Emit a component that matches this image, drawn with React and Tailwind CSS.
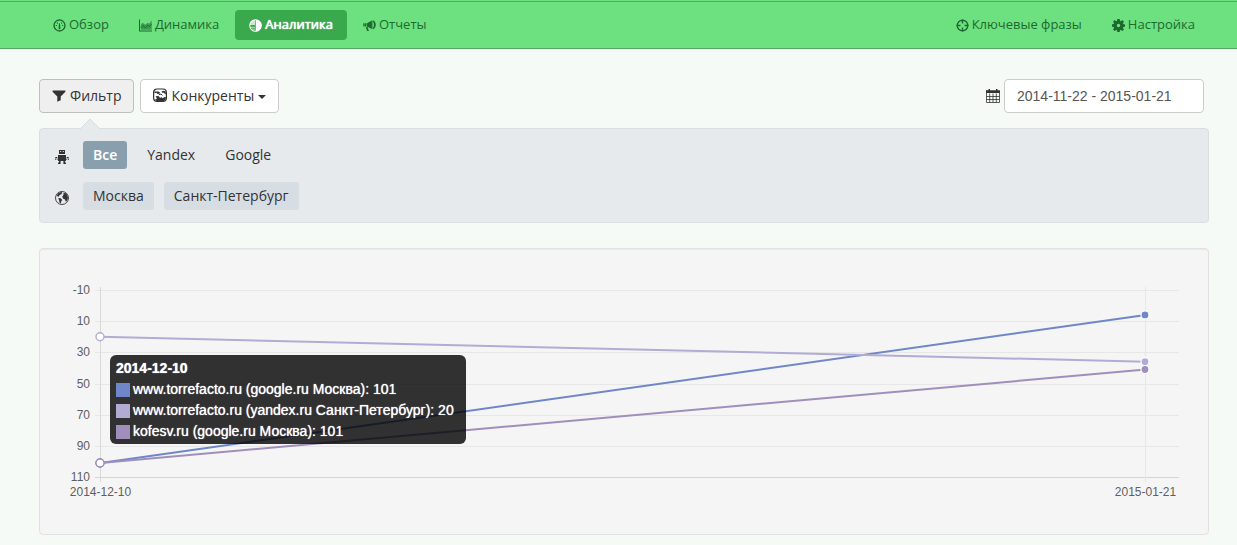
import clsx from "clsx";

const ICONS = {
  dashboard: (
    <>
      <circle cx="7" cy="7" r="5.9" fill="none" stroke="currentColor" strokeWidth="1.5" />
      <path d="M6.5 4.5h1l.5 5.5a1 1 0 0 1-2 0zM3 6.400h1.300v1.200H3zM9.700 6.400H11v1.200H9.700zM4.100 3.800h1.200V5H4.100zM8.700 3.800h1.200V5H8.700z" />
    </>
  ),
  stats: (
    <>
      <path d="M0 .5h1.100v12H14v1H0z" />
      <path d="M2 11.700V6l2.200-2 2.300 2.300L9.500 4l1.500 1.200L13.700 1.500v10.200z" opacity=".6" />
      <path d="M2 9.500l2.300-2.300L7 9.600l2.600-3 1.600 1.600 2.400-2.600" fill="none" stroke="currentColor" />
    </>
  ),
  pie: (
    <>
      <circle cx="7" cy="7" r="6.200" fill="none" stroke="currentColor" strokeWidth="1.100" />
      <path d="M7.300 .8A6.200 6.200 0 0 1 7.300 13.200z" />
      <path d="M6.500 .8A6.200 6.200 0 0 0 .8 6.500h5.700z" opacity=".75" />
      <path d="M1 9h5.500M1.800 11h4.700" stroke="currentColor" strokeWidth=".9" opacity=".7" />
    </>
  ),
  bullhorn: (
    <>
      <path d="M4.300 4.700 9.600 1.600v9.200L4.300 8.100zM.3 4.700h1.500v3.400H.3zM2.200 4.700h1.500v3.400H2.200zM3 8.600h2l1.300 4.200H4.400z" />
      <path d="M10.300 1.300c4.600.6 4.600 9.400 0 10z" />
      <path d="M11 3.300c1.200.8 1.200 5.200 0 6z" fill="#6de17f" />
    </>
  ),
  target: (
    <>
      <circle cx="7" cy="7" r="5.700" fill="none" stroke="currentColor" strokeWidth="1.500" />
      <path d="M7 .5v4.400M7 9.100v4.400M.5 7h4.400M9.100 7h4.400" stroke="currentColor" strokeWidth="1.500" />
    </>
  ),
  cog: (
    <path
      fillRule="evenodd"
      d="M5.700 0h2.600l.3 1.900 1 .4 1.600-1.100 1.700 1.700-1.100 1.600.4 1 1.800.3v2.500l-1.800.3-.4 1 1.100 1.600-1.700 1.700-1.600-1.100-1 .4L8.300 14H5.700l-.3-1.800-1-.4-1.600 1.100-1.700-1.700 1.100-1.600-.4-1L0 8.300V5.700l1.800-.3.4-1-1.100-1.600L2.800 1.200l1.600 1.100 1-.4zM7 5.200a1.800 1.800 0 1 0 0 3.600 1.800 1.800 0 0 0 0-3.600z"
    />
  ),
  filter: <path d="M.6 2.500h12.800v1.300L8.700 8.400v3.800l-3.400 1.600V8.400L.6 3.800z" />,
  competitors: (
    <>
      <rect x=".6" y="1" width="12.800" height="12.400" rx="3.500" fill="none" stroke="currentColor" strokeWidth="1.200" />
      <path d="M1.500 3.500h4l1.700 1.200-.8 1-1.900.2-1-1.200-2 .5zM8.500 3.700l1.500-1 2.500.6.5 3.200-1.500-1-1-1-1 .5zM2.500 8.300l3-.4L7 9.700l1.500-.4 1.300 1 1.700-1.300 1.500.3-.5 2.500L11 13H3.500L2 11.500l2-1z" />
      <path d="M5.800 6.800 8 6l1.500 1.500" fill="none" stroke="currentColor" />
    </>
  ),
  calendar: (
    <>
      <path d="M2.500 0H4v1.200h6V0h1.500v1.200H14v2.900H0V1.200h2.500z" />
      <path
        d="M.5 4v9.500h13V4M.5 7.500h13M.5 10.500h13M3.700 4.500v9M7 4.500v9M10.300 4.500v9"
        fill="none"
        stroke="currentColor"
        strokeWidth=".8"
      />
    </>
  ),
  robot: (
    <path
      fillRule="evenodd"
      d="M4 0h6v4H4zM5.200 1v1h1V1zm2.600 0v1h1V1zM3 5h8v6H3zM.3 7h2v1.200h-2zM11.700 7h2v1.200h-2zM0 8.800h1.200v1H0zM1.900 8.800h.8v1h-.8zM12.800 8.800H14v1h-1.200zM11.300 8.800h.8v1h-.8zM4 11h1.600v1.500H4zM8.400 11H10v1.500H8.400zM3 12.500h2.600V14H3zM8.400 12.500H11V14H8.400z"
    />
  ),
  globe: (
    <>
      <circle cx="7" cy="7" r="6.500" fill="none" stroke="currentColor" strokeWidth=".9" />
      <path d="M1.500 4.800 3.500 2l3-1 .8.800-1 1.400L4.500 4l-.7 1.700zM3.200 7l2.500.2L7.200 9l-1 1.500-.5 2-1.200-.8-.3-2.200zM7.200 5.500 8.500 4l-.3-1.500 2-.7 2 2 .8 3-.8 2.700-1.400 1.300L10 8.500 8 7.500z" />
    </>
  ),
};

function Icon({ name, className = "size-[14px]" }) {
  return (
    <svg viewBox="0 0 14 14" className={clsx("shrink-0 fill-current", className)} aria-hidden="true">
      {ICONS[name]}
    </svg>
  );
}

const NAV_MAIN = [
  { icon: "dashboard", label: "Обзор" },
  { icon: "stats", label: "Динамика" },
  { icon: "pie", label: "Аналитика", active: true },
  { icon: "bullhorn", label: "Отчеты" },
];

const NAV_SIDE = [
  { icon: "target", label: "Ключевые фразы" },
  { icon: "cog", label: "Настройка" },
];

function NavList({ items }) {
  return (
    <ul className="flex gap-[2px]">
      {items.map((item) => (
        <li key={item.label}>
          <a
            href="#"
            aria-current={item.active ? "page" : undefined}
            className={clsx(
              "flex h-[30px] items-center gap-[3px] rounded px-[14px] text-[13px]",
              item.active
                ? "bg-[#3aa84c] text-white [text-shadow:0_0_1px_#fff,0_0_1px_#fff]"
                : "text-[#1d6a30]"
            )}
          >
            <Icon name={item.icon} className="size-[13px]" />
            {item.label}
          </a>
        </li>
      ))}
    </ul>
  );
}

const FILTERS = [
  {
    icon: "robot",
    options: [{ label: "Все", tone: "active" }, { label: "Yandex" }, { label: "Google" }],
  },
  {
    icon: "globe",
    options: [{ label: "Москва", tone: "soft" }, { label: "Санкт-Петербург", tone: "soft" }],
  },
];

function FilterPanel() {
  return (
    <section className="relative mt-[15px] flex flex-col gap-[13px] rounded border border-[#d9dee1] bg-[#e6eaed] px-[15px] py-3">
      <svg viewBox="0 0 20 10" className="absolute -top-[10px] left-10 h-[10px] w-5" aria-hidden="true">
        <path d="M0 10 10 0l10 10z" fill="#e6eaed" />
        <path d="M0 10 10 0l10 10" fill="none" stroke="#d9dee1" />
      </svg>
      {FILTERS.map((row) => (
        <div key={row.icon} className="flex items-center gap-[14px]">
          <span className="pt-[3px]">
            <Icon name={row.icon} />
          </span>
          <div className="flex gap-[10px]">
            {row.options.map((o) => (
              <button
                key={o.label}
                type="button"
                className={clsx(
                  "h-7 rounded-[3px] px-[10px] text-[14px] leading-[20px]",
                  o.tone === "active" && "bg-[#8a9fad] font-semibold text-white",
                  o.tone === "soft" && "bg-[#d6dde3]"
                )}
              >
                {o.label}
              </button>
            ))}
          </div>
        </div>
      ))}
    </section>
  );
}

const GRID = [
  { label: "-10", y: 41.5 },
  { label: "10", y: 72.5 },
  { label: "30", y: 103.5 },
  { label: "50", y: 135.5 },
  { label: "70", y: 166.5 },
  { label: "90", y: 197.5 },
  { label: "110", y: 228.5 },
];

const X_LABELS = [
  { label: "2014-12-10", x: 60.5 },
  { label: "2015-01-21", x: 1105.5 },
];

const SERIES = [
  { label: "www.torrefacto.ru (google.ru Москва)", color: "#6f87c8", from: 101, to: 6 },
  { label: "www.torrefacto.ru (yandex.ru Санкт-Петербург)", color: "#b2abd3", from: 20, to: 36 },
  { label: "kofesv.ru (google.ru Москва)", color: "#a08fbb", from: 101, to: 41 },
];

const toY = (value) => 41 + ((value + 10) * 187) / 120;

function PositionsChart() {
  const [start, end] = X_LABELS;
  return (
    <section className="relative mt-[25px] rounded border border-[#e0e2e1] bg-[#f5f5f5] shadow-[inset_0_1px_1px_rgba(0,0,0,0.05)]">
      <svg viewBox="0 0 1168 285" className="block w-full font-['Liberation_Sans',Arial,sans-serif] text-[12px]">
        {GRID.map((g, i) => (
          <g key={g.label}>
            <path d={`M55 ${g.y}H1139`} stroke={i === GRID.length - 1 ? "#d4d4d4" : "#e7e7e7"} />
            <text x="50" y={g.y + 3} textAnchor="end" fill="#5f5f5f">
              {g.label}
            </text>
          </g>
        ))}
        {X_LABELS.map((l, i) => (
          <g key={l.label}>
            <path d={`M${l.x} 38V233`} stroke={i === 0 ? "#d9d9d9" : "#e7e7e7"} />
            <text x={l.x} y="247" textAnchor="middle" fill="#5f5f5f">
              {l.label}
            </text>
          </g>
        ))}
        {SERIES.map((s) => (
          <g key={s.label} stroke={s.color}>
            <path d={`M${start.x} ${toY(s.from)}L${end.x} ${toY(s.to)}`} strokeWidth="2" />
            <circle cx={start.x - 0.5} cy={toY(s.from)} r="4" fill="#fff" strokeWidth="1.4" />
            <circle cx={end.x - 0.5} cy={toY(s.to)} r="4" fill={s.color} stroke="#fff" strokeWidth="1.2" />
          </g>
        ))}
      </svg>
      <div
        role="tooltip"
        className="absolute top-[106px] left-[70px] min-w-[356px] rounded-md bg-black/80 px-[6px] pt-[3px] pb-[2px] font-['Liberation_Sans',Arial,sans-serif] text-[14px] leading-[21px] text-white [text-shadow:0_0_1px_#fff]"
      >
        <div className="font-bold">{start.label}</div>
        {SERIES.map((s) => (
          <div key={s.label} className="flex items-center gap-[3px]">
            <svg viewBox="0 0 14 14" className="size-[14px]" aria-hidden="true">
              <rect width="14" height="14" fill={s.color} />
            </svg>
            {s.label}: {s.from}
          </div>
        ))}
      </div>
    </section>
  );
}

export default function App() {
  return (
    <div className="min-h-screen bg-[#f5faf7] pb-[10px] font-['Open_Sans','Noto_Sans',sans-serif] text-[#333]">
      <div className="bg-[#6de17f] pt-px">
        <nav className="flex justify-between border-y border-[#53a965] py-2 pr-7 pl-[39px]">
          <NavList items={NAV_MAIN} />
          <NavList items={NAV_SIDE} />
        </nav>
      </div>

      <main className="pt-[30px] pr-7 pl-[39px]">
        <div className="flex items-center justify-between pr-[5px]">
          <div className="flex gap-[6px]">
            <button
              type="button"
              className="flex h-[34px] items-center gap-1 rounded border border-[#bfbfbf] bg-[#efefef] px-3 pb-[2px] text-[14px]"
            >
              <Icon name="filter" />
              Фильтр
            </button>
            <button
              type="button"
              className="flex h-[34px] items-center gap-1 rounded border border-[#ccc] bg-white px-3 pb-[2px] text-[14px]"
            >
              <Icon name="competitors" />
              Конкуренты
              <svg viewBox="0 0 8 4" className="mt-[3px] h-1 w-2 fill-current" aria-hidden="true">
                <path d="M0 0h8L4 4z" />
              </svg>
            </button>
          </div>
          <label className="flex items-center gap-1">
            <Icon name="calendar" />
            <input
              type="text"
              aria-label="Период"
              defaultValue="2014-11-22 - 2015-01-21"
              className="h-[34px] w-[200px] rounded border border-[#ccc] bg-white px-3 font-['Liberation_Sans',Arial,sans-serif] text-[14px] text-[#555] outline-none"
            />
          </label>
        </div>

        <FilterPanel />
        <PositionsChart />
      </main>
    </div>
  );
}
